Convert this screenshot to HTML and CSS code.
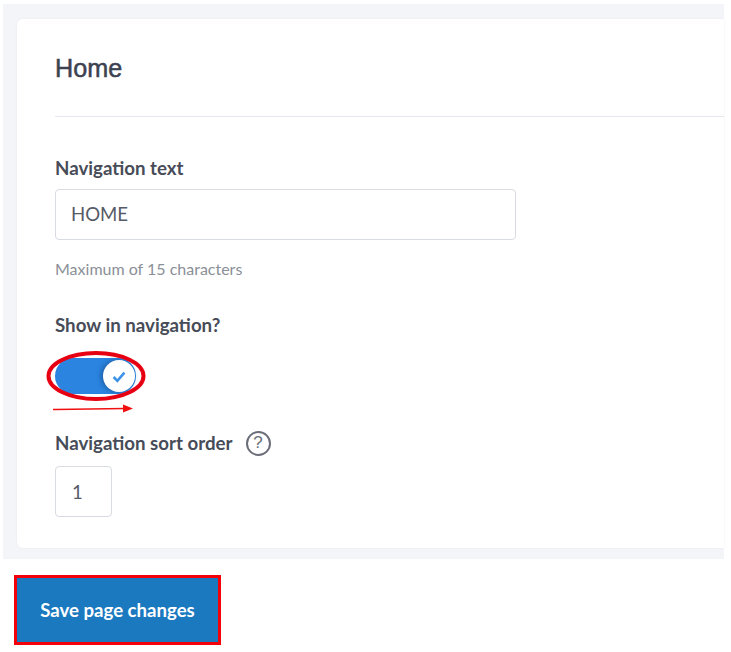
FILE: index.html
```html
<!DOCTYPE html>
<html lang="en">
<head>
    <meta charset="UTF-8">
    <meta name="viewport" content="width=device-width, initial-scale=1.0">
    <title>Home</title>

    <link rel="stylesheet" href="styles.css">
</head>
<body>

    <div class="panel">
        <div class="card">
            <h1 class="card-title">Home</h1>
            <hr class="divider">

            <label class="field-label">Navigation text</label>
            <input class="text-input" type="text" value="HOME">
            <p class="hint">Maximum of 15 characters</p>

            <label class="field-label show-label">Show in navigation?</label>
            <div class="toggle-wrap">
                <div class="toggle">
                    <div class="knob">
                        <svg width="16" height="13" viewBox="0 0 14 12">
                            <path d="M2 6.5 L5.5 10 L12 2.5" fill="none" stroke="#3d93e8" stroke-width="2.4"/>
                        </svg>
                    </div>
                </div>
                <svg class="ring" width="100" height="52" viewBox="0 0 100 52">
                    <ellipse cx="50" cy="26" rx="47.5" ry="23" fill="none" stroke="#e60012" stroke-width="4"/>
                </svg>
                <svg class="arrow" width="82" height="12" viewBox="0 0 82 12">
                    <path d="M0 6.5 L72 5.5" stroke="#f01010" stroke-width="1.4" fill="none"/>
                    <path d="M70 1.5 L80 5.5 L70 9.5 Z" fill="#f01010"/>
                </svg>
            </div>

            <div class="sort-row">
                <label class="field-label sort-label">Navigation sort order</label>
                <span class="help">?</span>
            </div>
            <input class="num-input" type="text" value="1">
        </div>
    </div>

    <div class="save-wrap">
        <button class="save-btn">Save page changes</button>
    </div>

</body>
</html>
```

FILE: styles.css
```css
html, body{
    margin: 0;
    background-color: white;
}
body{
    width: 731px;
    height: 652px;
    overflow: hidden;
    font-family: Lato, sans-serif;
    color: #3c4250;
}

.panel{
    box-sizing: border-box;
    width: 721px;
    height: 555px;
    margin: 4px 0 0 3px;
    padding: 15px 0 11px 14px;
    background-color: #f4f5f9;
}

.card{
    box-sizing: border-box;
    height: 529px;
    padding: 33px 0 0 38px;
    background-color: white;
    border-radius: 6px 0 0 6px;
    box-shadow: 0 0 2px #e6e7ec;
}

.card-title{
    margin: 0;
    font-family: "Liberation Sans", sans-serif;
    font-size: 25.2px;
    line-height: 32px;
    font-weight: normal;
    -webkit-text-stroke: 0.5px #3c4250;
}

.divider{
    margin: 32px 0 0;
    border: none;
    border-top: 1px solid #e6e8f0;
}

.field-label{
    display: block;
    font-size: 18.7px;
    line-height: 24px;
    font-weight: bold;
    color: #474c58;
}
.divider + .field-label{
    margin-top: 39px;
}

.text-input{
    display: block;
    box-sizing: border-box;
    width: 461px;
    height: 51px;
    margin-top: 9px;
    padding: 0 15px 2px;
    border: 1px solid #d9dbe2;
    border-radius: 4px;
    font-family: Lato, sans-serif;
    font-size: 18.6px;
    color: #555a65;
}

.hint{
    margin: 19px 0 0;
    font-size: 16px;
    line-height: 20px;
    color: #8b8f98;
}

.show-label{
    margin-top: 34px;
}

.toggle-wrap{
    position: relative;
    width: 90px;
    height: 72px;
    margin-top: 21px;
}

.toggle{
    box-sizing: border-box;
    display: flex;
    justify-content: flex-end;
    align-items: center;
    width: 81px;
    height: 36px;
    padding-right: 1px;
    background-color: #2a84e0;
    border-radius: 18px;
}

.knob{
    display: flex;
    justify-content: center;
    align-items: center;
    width: 32px;
    height: 32px;
    background-color: white;
    border-radius: 50%;
    box-shadow: -2px 0 5px rgba(20, 50, 90, 0.45);
}

.ring{
    position: absolute;
    left: -9px;
    top: -8px;
}

.arrow{
    position: absolute;
    left: -2px;
    top: 45px;
}

.sort-row{
    display: flex;
    align-items: center;
    gap: 13px;
    height: 24px;
    margin-top: 1px;
}

.help{
    display: flex;
    justify-content: center;
    align-items: center;
    box-sizing: border-box;
    width: 25px;
    height: 25px;
    border: 2px solid #6a6e78;
    border-radius: 50%;
    font-family: "Liberation Sans", sans-serif;
    font-size: 17px;
    color: #6a6e78;
}

.num-input{
    display: block;
    box-sizing: border-box;
    width: 57px;
    height: 51px;
    margin-top: 11px;
    padding: 0 16px;
    border: 1px solid #d9dbe2;
    border-radius: 4px;
    font-family: Lato, sans-serif;
    font-size: 18.6px;
    color: #555a65;
}

.save-wrap{
    padding: 16px 0 0 14px;
}

.save-btn{
    display: block;
    box-sizing: border-box;
    width: 207px;
    height: 70px;
    background-color: #1b79c0;
    border: 3px solid #f40009;
    font-family: Lato, sans-serif;
    font-size: 18.6px;
    font-weight: bold;
    color: white;
}
```
